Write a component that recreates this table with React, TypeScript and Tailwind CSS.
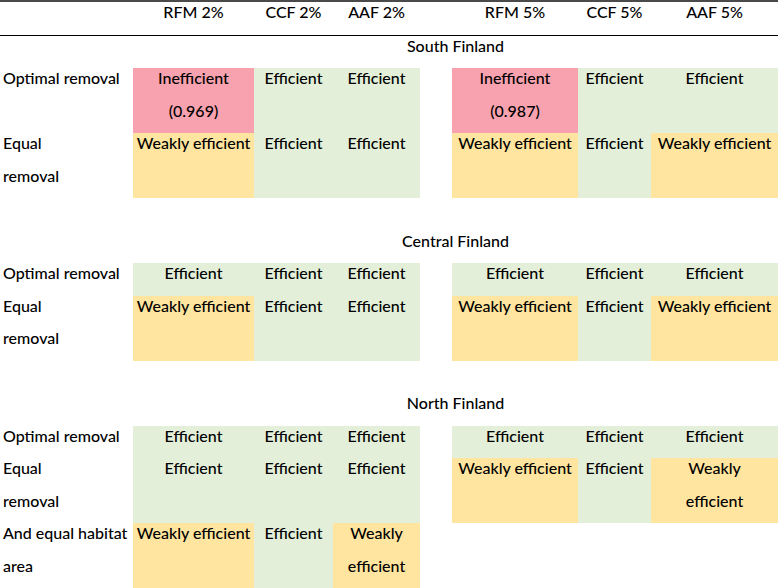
const cols = 'grid grid-cols-[133px_121px_79px_87px_32px_126px_73px_127px]'

type Tone = 'g' | 'y' | 'r' | ''

const toneBg: Record<string, string> = {
  g: 'bg-[#e3efd9]',
  y: 'bg-[#ffe59f]',
  r: 'bg-[#f7a2ae]',
  '': '',
}

const Cell = ({ tone = '', children, left }: { tone?: Tone; children?: React.ReactNode; left?: boolean }) => (
  <div className={`${toneBg[tone]} ${left ? 'text-left pl-[3px]' : 'text-center px-[2px]'} pb-[6px] whitespace-nowrap`}>
    <div className="-mt-[6px]">{children}</div>
  </div>
)

type Row = { label: React.ReactNode; cells: [Tone, React.ReactNode][] }

const Region = ({ title, rows }: { title: string; rows: Row[] }) => (
  <>
    <div className={cols}>
      <div className="col-start-2 col-span-7 text-center pb-[6px]">
        <div className="-mt-[6px]">{title}</div>
      </div>
    </div>
    {rows.map((r, i) => (
      <div key={i} className={cols}>
        <Cell left>{r.label}</Cell>
        {r.cells.slice(0, 3).map(([t, c], j) => (
          <Cell key={j} tone={t}>{c}</Cell>
        ))}
        <div />
        {r.cells.slice(3).map(([t, c], j) => (
          <Cell key={j} tone={t}>{c}</Cell>
        ))}
      </div>
    ))}
  </>
)

const Spacer = () => <div className="h-[32.5px]" />

const E = 'Efficient'
const W = 'Weakly efficient'

export default function App() {
  return (
    <div className="w-[778px] h-[588px] bg-white text-black text-[16px] font-medium leading-[32.5px] font-['Lato',sans-serif] overflow-hidden">
      <div className={`${cols} border-t-[2px] border-[#4a4a4a] border-b border-b-black`}>
        <div />
        <Cell>RFM 2%</Cell>
        <Cell>CCF 2%</Cell>
        <Cell>AAF 2%</Cell>
        <div />
        <Cell>RFM 5%</Cell>
        <Cell>CCF 5%</Cell>
        <Cell>AAF 5%</Cell>
      </div>

      <Region
        title="South Finland"
        rows={[
          {
            label: 'Optimal removal',
            cells: [
              ['r', <>Inefficient<br />(0.969)</>],
              ['g', E],
              ['g', E],
              ['r', <>Inefficient<br />(0.987)</>],
              ['g', E],
              ['g', E],
            ],
          },
          {
            label: <>Equal<br />removal</>,
            cells: [['y', W], ['g', E], ['g', E], ['y', W], ['g', E], ['y', W]],
          },
        ]}
      />
      <Spacer />
      <Region
        title="Central Finland"
        rows={[
          {
            label: 'Optimal removal',
            cells: [['g', E], ['g', E], ['g', E], ['g', E], ['g', E], ['g', E]],
          },
          {
            label: <>Equal<br />removal</>,
            cells: [['y', W], ['g', E], ['g', E], ['y', W], ['g', E], ['y', W]],
          },
        ]}
      />
      <Spacer />
      <Region
        title="North Finland"
        rows={[
          {
            label: 'Optimal removal',
            cells: [['g', E], ['g', E], ['g', E], ['g', E], ['g', E], ['g', E]],
          },
          {
            label: <>Equal<br />removal</>,
            cells: [['g', E], ['g', E], ['g', E], ['y', W], ['g', E], ['y', <>Weakly<br />efficient</>]],
          },
          {
            label: <>And equal habitat<br />area</>,
            cells: [['y', W], ['g', E], ['y', <>Weakly<br />efficient</>], ['', ''], ['', ''], ['', '']],
          },
        ]}
      />
      <div className="border-t-[2px] border-[#4a4a4a]" />
    </div>
  )
}
